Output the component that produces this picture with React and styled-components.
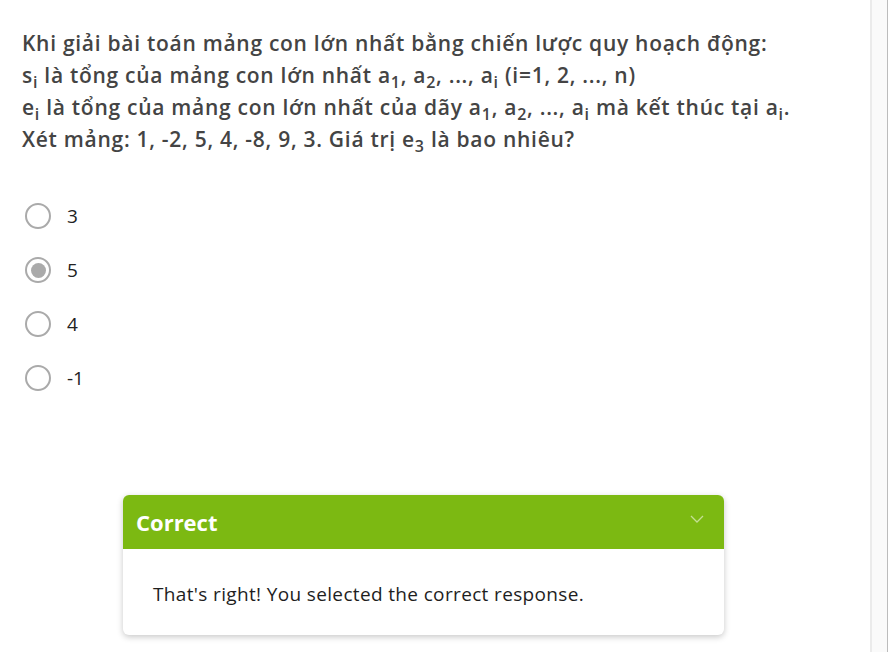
import React from "react"
import styled, { createGlobalStyle } from "styled-components"

const GlobalStyle = createGlobalStyle`
	html, body {
		margin: 0;
		padding: 0;
		background: #fff;
	}
	body {
		font-family: "Open Sans", "Noto Sans", sans-serif;
	}
`

const OPTIONS = ["3", "5", "4", "-1"]

const App = () => (
	<>
		<GlobalStyle />
		<Page>
			<Main>
				<Question>
					<Line>Khi giải bài toán mảng con lớn nhất bằng chiến lược quy hoạch động:</Line>
					<Line>s<Sub>i</Sub> là tổng của mảng con lớn nhất a<Sub>1</Sub>, a<Sub>2</Sub>, ..., a<Sub>i</Sub> (i=1, 2, ..., n)</Line>
					<Line>e<Sub>i</Sub> là tổng của mảng con lớn nhất của dãy a<Sub>1</Sub>, a<Sub>2</Sub>, ..., a<Sub>i</Sub> mà kết thúc tại a<Sub>i</Sub>.</Line>
					<Line>Xét mảng: 1, -2, 5, 4, -8, 9, 3. Giá trị e<Sub>3</Sub> là bao nhiêu?</Line>
				</Question>

				<Options>
					{OPTIONS.map((o, i) => (
						<Option key={i}>
							<Radio checked={i === 1} />
							<Label>{o}</Label>
						</Option>
					))}
				</Options>

				<Feedback>
					<FeedbackHead>
						<span>Correct</span>
						<svg width="14" height="8" viewBox="0 0 14 8">
							<path d="M1 1 L7 7 L13 1" fill="none" stroke="rgba(255,255,255,0.55)" strokeWidth="1.3" />
						</svg>
					</FeedbackHead>
					<FeedbackBody>That's right! You selected the correct response.</FeedbackBody>
				</Feedback>
			</Main>
			<Rail />
		</Page>
	</>
)

const Page = styled.div`
	display: flex;
	height: 652px;
	overflow: hidden;
`

const Main = styled.div`
	flex: 1;
	padding: 27px 0 0 22px;
`

const Question = styled.div`
	font-size: 21px;
	font-weight: 600;
	letter-spacing: 0.72px;
	line-height: 32px;
	color: #444;
`

const Line = styled.div`
	white-space: nowrap;
`

const Sub = styled.sub`
	font-size: 16px;
	vertical-align: -5px;
	line-height: 0;
`

const Options = styled.div`
	margin-top: 34px;
	display: flex;
	flex-direction: column;
`

const Option = styled.div`
	height: 54px;
	display: flex;
	align-items: center;
`

const Radio = styled.span`
	width: 26px;
	height: 26px;
	margin-left: 3px;
	box-sizing: border-box;
	border: 2.5px solid #aaa;
	border-radius: 50%;
	display: flex;
	align-items: center;
	justify-content: center;

	&::after {
		content: "";
		width: 15px;
		height: 15px;
		border-radius: 50%;
		background: #aaa;
		display: ${p => (p.checked ? "block" : "none")};
	}
`

const Label = styled.span`
	margin-left: 16px;
	font-size: 19px;
	color: #222;
`

const Feedback = styled.div`
	margin: 90px 0 0 101px;
	width: 601px;
	border-radius: 6px;
	overflow: hidden;
	background: #fff;
	box-shadow: 0 2px 6px rgba(0, 0, 0, 0.22);
`

const FeedbackHead = styled.div`
	height: 54px;
	background: #7cb912;
	display: flex;
	align-items: center;
	justify-content: space-between;
	padding: 0 20px 0 13px;
	font-size: 22px;
	font-weight: 700;
	color: #fff;

	svg {
		margin-top: -6px;
	}
`

const FeedbackBody = styled.div`
	padding: 33px 30px 29px;
	font-size: 19px;
	letter-spacing: 0.35px;
	line-height: 24px;
	color: #1e1e1e;
`

const Rail = styled.div`
	width: 15px;
	flex: none;
	background: #fafafa;
	border-left: 2px solid #ebebeb;
	border-right: 1px solid #bcbcbc;
`

export default App
